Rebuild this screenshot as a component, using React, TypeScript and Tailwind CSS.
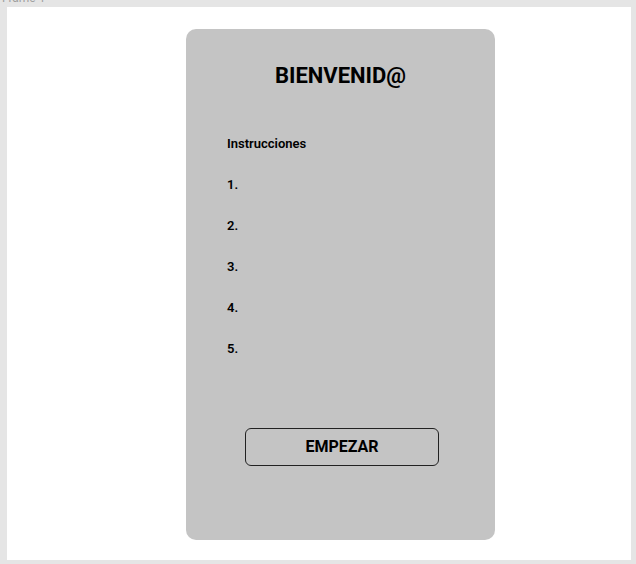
export default function App() {
  const pasos = ["1.", "2.", "3.", "4.", "5."];
  return (
    <div className="w-[636px] h-[564px] bg-[#e5e5e5] overflow-hidden font-['Roboto',sans-serif]">
      <div className="h-[7px] overflow-hidden pl-[2px]">
        <p className="text-[12px] leading-[14px] -mt-[9px] text-[#a0a0a0]">Frame 1</p>
      </div>
      <div className="ml-[7px] w-[624px] h-[553px] bg-white pt-[22px] pl-[179px]">
        <div className="w-[309px] h-[511px] rounded-[10px] bg-[#c4c4c4] flex flex-col">
          <h1 className="mt-[33px] text-center text-[22px] leading-[28px] font-bold text-black">BIENVENID@</h1>
          <div className="mt-[46px] pl-[41px] flex flex-col text-black">
            <p className="text-[13px] leading-[16px] font-semibold">Instrucciones</p>
            <ul className="mt-[25px] flex flex-col gap-[25px]">
              {pasos.map((p) => (
                <li key={p} className="text-[13px] leading-[16px] font-semibold">
                  {p}
                </li>
              ))}
            </ul>
          </div>
          <button className="mt-[71px] ml-[59px] w-[194px] h-[38px] rounded-[6px] border border-[#222] text-[16px] font-bold text-black">
            EMPEZAR
          </button>
        </div>
      </div>
    </div>
  );
}
